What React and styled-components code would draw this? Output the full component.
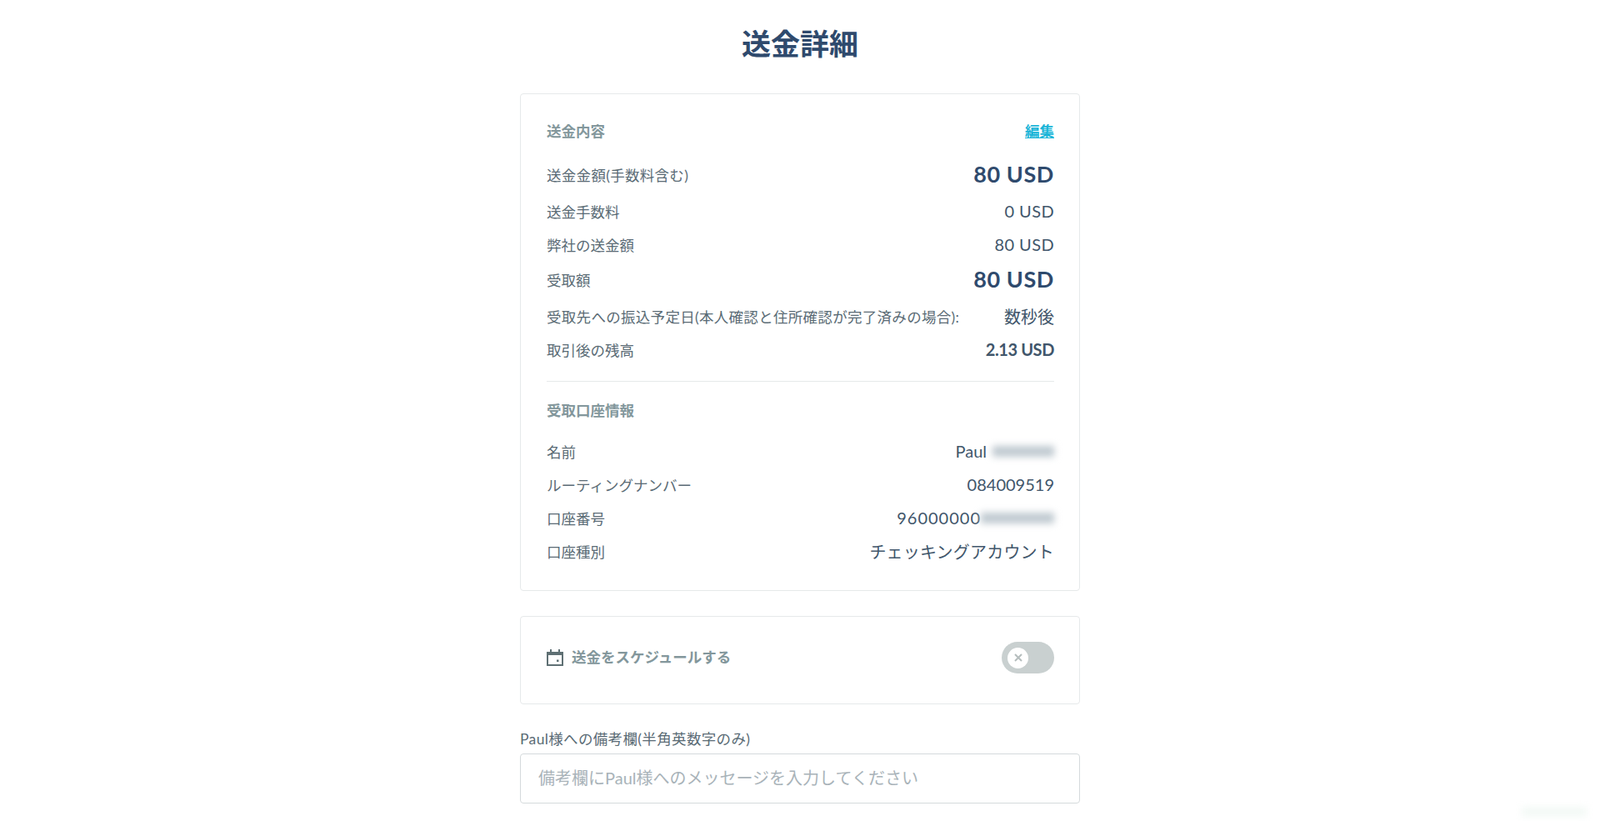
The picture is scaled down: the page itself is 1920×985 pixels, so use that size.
import styled, { createGlobalStyle } from "styled-components"

const GlobalStyle = createGlobalStyle`
body {
  margin: 0;
  background: #fff;
  font-family: Lato, "Noto Sans CJK JP", sans-serif;
}
`

const Page = styled.div`
width: 672px;
margin: 0 auto;
height: 985px;
overflow: hidden;
`

const Title = styled.h1`
margin: 0;
height: 112px;
padding-top: 30px;
box-sizing: border-box;
text-align: center;
font-size: 35px;
line-height: 44px;
font-weight: 700;
color: #2f4a6d;
`

const Card = styled.section`
border: 1px solid #e6e9ea;
border-radius: 4px;
padding: ${props => props.$padding};
margin-bottom: ${props => props.$bottom};
`

const Row = styled.div`
display: flex;
justify-content: space-between;
align-items: center;
height: ${props => props.$big ? "44px" : "40px"};
margin-bottom: ${props => props.$big ? "2px" : "0"};
`

const HeadRow = styled(Row)`
margin-bottom: ${props => props.$bottom};
`

const SectionTitle = styled.span`
font-size: 17.5px;
font-weight: 700;
color: #83979c;
`

const EditLink = styled.a`
font-size: 17.5px;
font-weight: 700;
color: #1cb5d8;
text-decoration: underline;
`

const Label = styled.span`
font-size: 17.5px;
letter-spacing: ${props => props.$tracking || "0"};
color: #5a6b75;
`

const Value = styled.span`
display: flex;
align-items: center;
padding-bottom: ${props => props.$big ? "2px" : "0"};
font-size: ${props => props.$big ? "27px" : "20px"};
font-weight: ${props => props.$big || props.$bold ? 700 : 400};
letter-spacing: ${props => props.$tracking || "0"};
color: ${props => props.$big ? "#2f4a6d" : "#41566b"};
`

const Blurred = styled.span`
display: inline-block;
width: ${props => props.$width};
height: 13px;
margin-left: ${props => props.$gap};
background: #bfc9d0;
filter: blur(4px);
`

const Divider = styled.hr`
border: none;
border-top: 1px solid #e6e9ea;
margin: 18px 0 13px;
`

const ScheduleRow = styled.div`
display: flex;
align-items: center;
justify-content: space-between;
height: 38px;
`

const ScheduleLabel = styled.span`
display: flex;
align-items: center;
gap: 10px;
padding-bottom: 3px;
font-size: 17.5px;
font-weight: 700;
color: #83979c;
`

const CalendarSvg = styled.svg`
margin-top: 3px;
`

const Toggle = styled.div`
display: flex;
align-items: center;
width: 63px;
height: 38px;
padding-left: 7px;
box-sizing: border-box;
border-radius: 19px;
background: #c9d0d0;
`

const Knob = styled.span`
display: flex;
align-items: center;
justify-content: center;
width: 25px;
height: 25px;
border-radius: 50%;
background: #fff;
`

const FieldLabel = styled.label`
display: block;
font-size: 17.5px;
line-height: 24px;
letter-spacing: 0.35px;
color: #5a6b75;
margin-bottom: 5px;
`

const Input = styled.input`
display: block;
width: 100%;
height: 60px;
box-sizing: border-box;
padding: 0 21px 2px;
border: 1px solid #d5dadc;
border-radius: 4px;
outline: none;
font-family: inherit;
font-size: 20px;
color: #41566b;
&::placeholder {
  color: #a9b3b9;
  opacity: 1;
}
`

const ChatGhost = styled.div`
position: fixed;
right: 16px;
bottom: 6px;
width: 78px;
height: 10px;
background: #f1f8f4;
filter: blur(5px);
`

function CalendarIcon() {
    return (
        <CalendarSvg width="20" height="20" viewBox="0 0 20 20" fill="none" stroke="#5f7074" strokeWidth="2">
            <rect x="1" y="4" width="18" height="15" />
            <path d="M1 6h18" />
            <path d="M5 0v4M15 0v4" />
            <rect x="12" y="12.5" width="2.5" height="2.5" fill="#5f7074" stroke="none" />
        </CalendarSvg>
    )
}

function App() {
    return <>
        <GlobalStyle />
        <Page>
            <Title>送金詳細</Title>
            <Card $padding="23px 30px 27px 31px" $bottom="30px">
                <HeadRow $bottom="11px">
                    <SectionTitle>送金内容</SectionTitle>
                    <EditLink href="#">編集</EditLink>
                </HeadRow>
                <Row $big><Label $tracking="0.3px">送金金額(手数料含む)</Label><Value $big $tracking="0.6px">80 USD</Value></Row>
                <Row><Label>送金手数料</Label><Value $tracking="0.4px">0 USD</Value></Row>
                <Row><Label>弊社の送金額</Label><Value $tracking="0.4px">80 USD</Value></Row>
                <Row $big><Label>受取額</Label><Value $big $tracking="0.6px">80 USD</Value></Row>
                <Row><Label $tracking="0.3px">受取先への振込予定日(本人確認と住所確認が完了済みの場合):</Label><Value>数秒後</Value></Row>
                <Row><Label>取引後の残高</Label><Value $bold $tracking="-0.4px">2.13 USD</Value></Row>
                <Divider />
                <HeadRow $bottom="10px">
                    <SectionTitle>受取口座情報</SectionTitle>
                </HeadRow>
                <Row><Label>名前</Label><Value>Paul<Blurred $width="74px" $gap="7px" /></Value></Row>
                <Row><Label>ルーティングナンバー</Label><Value>084009519</Value></Row>
                <Row><Label>口座番号</Label><Value $tracking="1px">96000000<Blurred $width="88px" $gap="0" /></Value></Row>
                <Row><Label>口座種別</Label><Value $tracking="0.2px">チェッキングアカウント</Value></Row>
            </Card>
            <Card $padding="30px 30px 36px 31px" $bottom="30px">
                <ScheduleRow>
                    <ScheduleLabel><CalendarIcon />送金をスケジュールする</ScheduleLabel>
                    <Toggle>
                        <Knob>
                            <svg width="10" height="10" viewBox="0 0 10 10" stroke="#b5bdbd" strokeWidth="2">
                                <path d="M1 1l8 8M9 1L1 9" />
                            </svg>
                        </Knob>
                    </Toggle>
                </ScheduleRow>
            </Card>
            <FieldLabel>Paul様への備考欄(半角英数字のみ)</FieldLabel>
            <Input placeholder="備考欄にPaul様へのメッセージを入力してください" />
        </Page>
        <ChatGhost />
    </>
}

export default App
